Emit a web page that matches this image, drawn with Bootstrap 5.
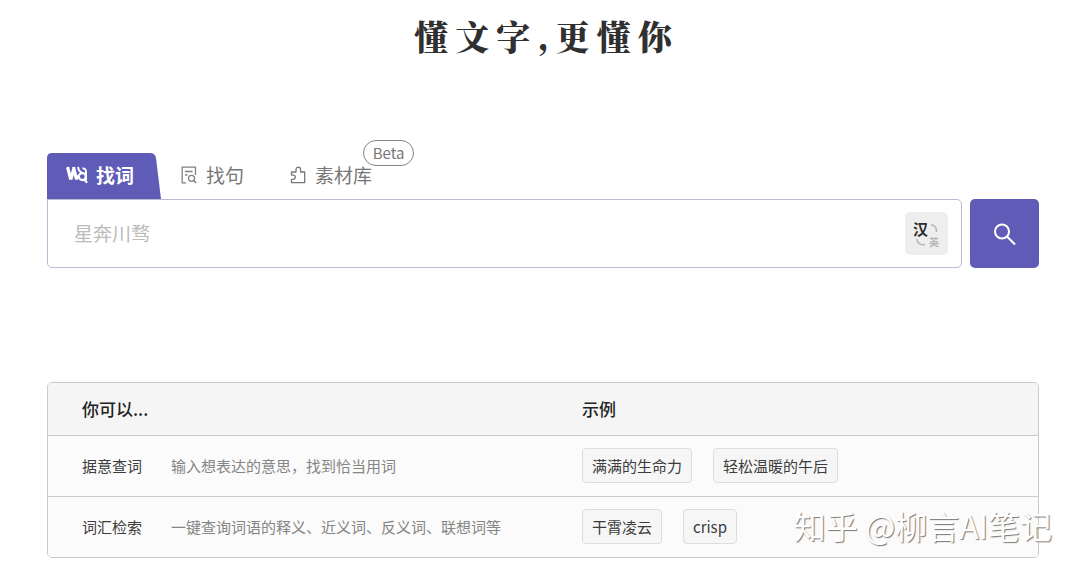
<!DOCTYPE html>
<html lang="zh-CN">
<head>
<meta charset="utf-8">
<meta name="viewport" content="width=device-width, initial-scale=1">
<title>懂文字,更懂你</title>
<link href="https://cdn.jsdelivr.net/npm/bootstrap@5.3.0/dist/css/bootstrap.min.css" rel="stylesheet">
<style>
  :root { --brand: #5f5cb8; --line: #cbcbcb; }
  body { font-family: "Noto Sans CJK SC", sans-serif; color: #333; background: #fff; }
  .page { padding: 12px 41px 16px 47px; }
  .slogan { font-size: 34px; line-height: 48px; font-weight: 900; letter-spacing: 7px; text-indent: 7px; margin-bottom: 93px; color: #303030; font-family: "Noto Serif CJK SC", "Noto Sans CJK SC", serif; }
  .tabs .nav-link { display: flex; align-items: center; gap: 8px; height: 46px; padding: 0 2px 2px 0; font-size: 19px; color: #777; border: 0; border-radius: 0; position: relative; }
  .tabs .nav-link.active { width: 114px; padding-left: 19px; font-weight: 700; color: #fff; background: none; }
  .tabs .tab-shape { position: absolute; inset: 0; width: 100%; height: 100%; fill: var(--brand); }
  .tabs .tab-icon, .tabs .tab-label { position: relative; }
  .tabs .item-sentence { margin-left: 20px; }
  .tabs .item-library { margin-left: 44px; }
  .beta { position: absolute; left: 73px; top: -13px; width: 51px; height: 26px; border: 1px solid #858585; border-radius: 13px; background: #fff; color: #777; font-size: 15px; line-height: 24px; text-align: center; }
  .search-box { border: 1px solid #bdbbd2; border-radius: 0 5px 5px 5px; height: 69px; padding: 0 13px 0 26px; }
  .search-box .form-control { font-size: 19px; color: #333; padding: 0; }
  .search-box .form-control::placeholder { color: #bbb; }
  .lang { width: 43px; height: 43px; border: 0; border-radius: 5px; background: #eee; }
  .go { width: 69px; border: 0; border-radius: 5px; background: var(--brand); }
  .guide { margin-top: 114px; border: 1px solid var(--line); border-radius: 5px; overflow: hidden; }
  .guide .table { --bs-table-bg: #fbfbfb; table-layout: fixed; font-size: 15px; line-height: 24px; border-color: var(--line); }
  .guide .table th, .guide .table td { padding: 0; color: #3c3c3c; }
  .guide .table th:first-child { padding-left: 34px; }
  .guide .table thead th { --bs-table-bg: #f5f5f5; height: 52px; font-size: 17px; font-weight: 500; color: #222; vertical-align: middle; }
  .guide .table tbody th { font-weight: 400; }
  .guide tbody tr { height: 61px; }
  .guide tbody tr:last-child > * { border-bottom: 0; }
  .guide .table td.desc { color: #858585; }
  .guide .table .samples { padding-left: 39px; }
  .chip { height: 35px; padding: 1px 9px 0; border: 1px solid #ddd; border-radius: 4px; background: #f6f6f7; color: #3c3c3c; font-size: 15px; line-height: 24px; white-space: nowrap; }
  .col-name { width: 123px; }
  .chips { gap: 21px; }
  .watermark { position: absolute; right: 28px; bottom: 22px; font-size: 32px; line-height: 54px; color: #fff; text-shadow: 1px 1px 1px #777; white-space: nowrap; pointer-events: none; }
</style>
</head>
<body>
<main class="page container-fluid position-relative">
  <h1 class="slogan text-center">懂文字,更懂你</h1>

  <nav class="nav tabs" aria-label="搜索类型">
    <a class="nav-link active" href="#word" aria-current="page">
      <svg class="tab-shape" viewBox="0 0 114 46" preserveAspectRatio="none" aria-hidden="true"><path d="M0 46V5Q0 0 5 0H103Q108 0 109 5L114 46Z"/></svg>
      <svg class="tab-icon" width="22" height="20" viewBox="0 0 22 20" fill="none" stroke="#fff" aria-hidden="true">
        <path d="M1.500 2 4.800 14.500M7.500 2 10.500 14.500M4.800 14.500 7.800 4" stroke-width="3.200"/>
        <path d="M10.500 14.500 11.500 10" stroke-width="2.600"/>
        <path d="M12 2 13 5.500 15.800 7.800" stroke-width="2"/>
        <path d="M16.500 3.500Q20 3 20 7V15" stroke-width="2"/>
        <circle cx="16.300" cy="11.600" r="3.500" stroke-width="2.200"/>
        <path d="m18.200 14.300 2.800 3.500" stroke-width="2.200"/>
      </svg>
      <span class="tab-label">找词</span>
    </a>
    <a class="nav-link item-sentence" href="#sentence">
      <svg width="17" height="18" viewBox="0 0 17 18" fill="none" stroke="#808080" stroke-width="1.300" aria-hidden="true">
        <path d="M5 16.800H1.200V1.200H14.500V9M4 5.500H11.500M4 9H6.500"/>
        <circle cx="10.500" cy="12.300" r="3"/><path d="m12.800 14.500 2.400 2.500"/>
      </svg>
      <span class="tab-label">找句</span>
    </a>
    <a class="nav-link item-library" href="#library">
      <svg width="17" height="18" viewBox="0 0 17 18" fill="none" stroke="#777" stroke-width="1.300" stroke-linejoin="round" aria-hidden="true">
        <path d="M1.500 6H6V3.500A2.300 2.300 0 0 1 10.600 3.500V6H14.700V16.700H1.500V13.300H3.200A2.100 2.100 0 0 0 3.200 9.100H1.500Z"/>
      </svg>
      <span class="tab-label">素材库</span>
      <span class="beta">Beta</span>
    </a>
  </nav>

  <form class="d-flex gap-2" role="search">
    <div class="search-box flex-grow-1 d-flex align-items-center">
      <input class="form-control border-0 shadow-none bg-transparent" type="text" placeholder="星奔川骛" aria-label="搜索">
      <button class="lang flex-shrink-0 p-0" type="button" aria-label="汉英切换">
        <svg width="43" height="43" viewBox="0 0 43 43" aria-hidden="true">
          <text x="8" y="23" font-size="15" font-weight="700" fill="#2b2b2b">汉</text>
          <text x="24" y="34" font-size="10" font-weight="700" fill="#b5b5b5">英</text>
          <path d="M26 13Q31.500 13 31.500 20M12 27Q12 33 20 33" fill="none" stroke="#b5b5b5" stroke-width="1.500"/>
        </svg>
      </button>
    </div>
    <button class="go flex-shrink-0 p-0" type="submit" aria-label="搜索">
      <svg width="24" height="24" viewBox="0 0 24 24" fill="none" stroke="#fff" stroke-width="2" aria-hidden="true"><circle cx="9" cy="8.500" r="7"/><path d="m14 13.500 8 8"/></svg>
    </button>
  </form>

  <section class="guide">
    <table class="table align-middle mb-0">
      <colgroup><col class="col-name"><col><col class="w-50"></colgroup>
      <thead>
        <tr><th colspan="2" scope="col">你可以...</th><th class="samples" scope="col">示例</th></tr>
      </thead>
      <tbody>
        <tr>
          <th scope="row">据意查词</th>
          <td class="desc">输入想表达的意思，找到恰当用词</td>
          <td class="samples"><div class="chips d-flex"><button class="chip" type="button">满满的生命力</button><button class="chip" type="button">轻松温暖的午后</button></div></td>
        </tr>
        <tr>
          <th scope="row">词汇检索</th>
          <td class="desc">一键查询词语的释义、近义词、反义词、联想词等</td>
          <td class="samples"><div class="chips d-flex"><button class="chip" type="button">干霄凌云</button><button class="chip" type="button">crisp</button></div></td>
        </tr>
      </tbody>
    </table>
  </section>
  <div class="watermark">知乎 @柳言AI笔记</div>
</main>
<script src="https://cdn.jsdelivr.net/npm/bootstrap@5.3.0/dist/js/bootstrap.bundle.min.js"></script>
</body>
</html>
